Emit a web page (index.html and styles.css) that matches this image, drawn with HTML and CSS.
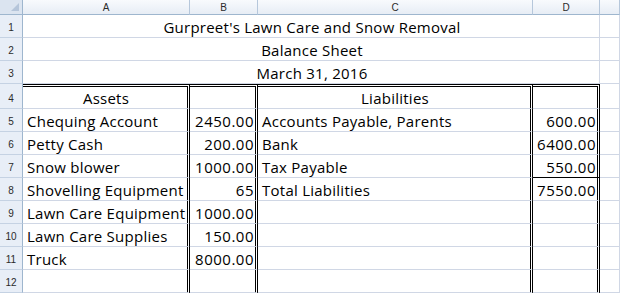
FILE: index.html
```html
<!DOCTYPE html>
<html lang="en">
<head>
<meta charset="utf-8">
<title>Balance Sheet</title>
<link rel="stylesheet" href="styles.css">
</head>
<body>
<div class="sheet">
  <div class="corner"><span class="tri"></span></div>
  <div class="ch">A</div>
  <div class="ch">B</div>
  <div class="ch">C</div>
  <div class="ch">D</div>
  <div class="ch"></div>

  <div class="rh">1</div>
  <div class="c mg">Gurpreet's Lawn Care and Snow Removal</div>
  <div class="c"></div>

  <div class="rh">2</div>
  <div class="c mg">Balance Sheet</div>
  <div class="c"></div>

  <div class="rh">3</div>
  <div class="c mg">March 31, 2016</div>
  <div class="c"></div>

  <div class="rh r4">4</div>
  <div class="c bx top ctr">Assets</div>
  <div class="c bx top"></div>
  <div class="c bx top ctr">Liabilities</div>
  <div class="c bx top"></div>
  <div class="c"></div>

  <div class="rh">5</div>
  <div class="c bx">Chequing Account</div>
  <div class="c bx num">2450.00</div>
  <div class="c bx">Accounts Payable, Parents</div>
  <div class="c bx num">600.00</div>
  <div class="c"></div>

  <div class="rh">6</div>
  <div class="c bx">Petty Cash</div>
  <div class="c bx num">200.00</div>
  <div class="c bx">Bank</div>
  <div class="c bx num">6400.00</div>
  <div class="c"></div>

  <div class="rh">7</div>
  <div class="c bx">Snow blower</div>
  <div class="c bx num">1000.00</div>
  <div class="c bx">Tax Payable</div>
  <div class="c bx num under">550.00</div>
  <div class="c"></div>

  <div class="rh">8</div>
  <div class="c bx">Shovelling Equipment</div>
  <div class="c bx num">65</div>
  <div class="c bx">Total Liabilities</div>
  <div class="c bx num">7550.00</div>
  <div class="c"></div>

  <div class="rh">9</div>
  <div class="c bx">Lawn Care Equipment</div>
  <div class="c bx num">1000.00</div>
  <div class="c bx"></div>
  <div class="c bx"></div>
  <div class="c"></div>

  <div class="rh">10</div>
  <div class="c bx">Lawn Care Supplies</div>
  <div class="c bx num">150.00</div>
  <div class="c bx"></div>
  <div class="c bx"></div>
  <div class="c"></div>

  <div class="rh">11</div>
  <div class="c bx">Truck</div>
  <div class="c bx num">8000.00</div>
  <div class="c bx"></div>
  <div class="c bx"></div>
  <div class="c"></div>

  <div class="rh">12</div>
  <div class="c bx"></div>
  <div class="c bx"></div>
  <div class="c bx"></div>
  <div class="c bx"></div>
  <div class="c"></div>
</div>
</body>
</html>
```

FILE: styles.css
```css
* { box-sizing: border-box; }

html, body {
  margin: 0;
  padding: 0;
  background: #ffffff;
  overflow: hidden;
}

.sheet {
  display: grid;
  grid-template-columns: 23px 167px 68px 275px 67px 20px;
  grid-template-rows: 15px 23px 23px 23px 25px repeat(8, 23px);
  width: 620px;
  height: 293px;
  font-family: "Open Sans", "Liberation Sans", sans-serif;
  font-size: 15px;
  color: #000;
}

.corner {
  display: flex;
  align-items: flex-end;
  justify-content: flex-end;
  padding: 0 3px 3px 0;
  background: #dbe4f0;
  border-right: 1px solid #9eb6ce;
  border-bottom: 1px solid #9eb6ce;
}

.tri {
  width: 0;
  height: 0;
  border-left: 8px solid transparent;
  border-bottom: 8px solid #b5c5da;
}

.ch {
  display: flex;
  align-items: center;
  justify-content: center;
  font-family: "Liberation Sans", sans-serif;
  font-size: 10px;
  color: #2b2b2b;
  background: linear-gradient(#f8fafd, #e7edf5);
  border-right: 1px solid #b6c7db;
  border-bottom: 1px solid #9eb6ce;
}

.rh {
  display: flex;
  align-items: center;
  justify-content: center;
  padding-top: 2px;
  font-family: "Liberation Sans", sans-serif;
  font-size: 10px;
  color: #2b2b2b;
  background: #e8eef7;
  border-right: 1px solid #9eb6ce;
  border-bottom: 1px solid #c5d2e3;
}

.rh.r4 { padding-top: 5px; }

.c {
  display: flex;
  align-items: flex-end;
  padding: 0 2px 1px 4px;
  line-height: 18px;
  letter-spacing: 0.25px;
  white-space: nowrap;
  overflow: hidden;
  border-right: 1px solid #d0d7e5;
  border-bottom: 1px solid #d0d7e5;
}

.mg {
  grid-column: 2 / 6;
  justify-content: center;
}

.ctr { justify-content: center; }

.num {
  justify-content: flex-end;
  letter-spacing: 0.5px;
  padding-right: 1px;
  padding-left: 1px;
}

.bx { border-right: 3px double #000; }

.top { border-top: 3px double #000; }

.under { border-bottom: 1px solid #000; }
```
